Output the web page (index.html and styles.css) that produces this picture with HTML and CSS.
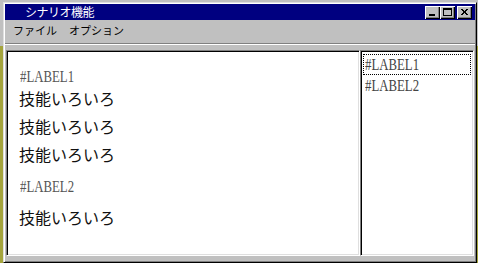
FILE: index.html
```html
<!DOCTYPE html>
<html lang="ja">
<head>
<meta charset="utf-8">
<title>シナリオ機能</title>
<link rel="stylesheet" href="styles.css">
</head>
<body>
<div class="window">
  <div class="titlebar">
    <span class="title">シナリオ機能</span>
    <div class="tbuttons">
      <span class="tbtn"><svg width="15" height="13" viewBox="0 0 15 13"><rect x="4" y="8" width="6" height="2" fill="#000"/></svg></span>
      <span class="tbtn"><svg width="15" height="13" viewBox="0 0 15 13"><rect x="3.5" y="2.5" width="8" height="7" fill="none" stroke="#000"/><rect x="3" y="2" width="9" height="2" fill="#000"/></svg></span>
      <span class="tbtn gap"><svg width="15" height="13" viewBox="0 0 15 13"><path d="M4 3 L10 9 M5 3 L11 9 M10 3 L4 9 M11 3 L5 9" stroke="#000" stroke-width="1" shape-rendering="crispEdges"/></svg></span>
    </div>
  </div>
  <div class="menubar">
    <span class="menuitem">ファイル</span>
    <span class="menuitem">オプション</span>
  </div>
  <div class="separator"></div>
  <div class="panes">
    <div class="pane main">
      <div class="label"><span class="narrow">#LABEL1</span></div>
      <div class="skill">技能いろいろ</div>
      <div class="skill">技能いろいろ</div>
      <div class="skill">技能いろいろ</div>
      <div class="label second"><span class="narrow">#LABEL2</span></div>
      <div class="skill">技能いろいろ</div>
    </div>
    <div class="pane list">
      <div class="item focused"><span class="narrow">#LABEL1</span></div>
      <div class="item"><span class="narrow">#LABEL2</span></div>
    </div>
  </div>
</div>
</body>
</html>
```
FILE: styles.css
```css
html, body {
  margin: 0;
  padding: 0;
}
body {
  width: 478px;
  height: 263px;
  overflow: hidden;
  background: linear-gradient(to bottom, #c0c0c0 46px, #a4a43c 46px);
}
.window {
  box-sizing: border-box;
  margin: 2px 0 0 3px;
  width: 474px;
  height: 261px;
  background: #c0c0c0;
  border: 1px solid;
  border-color: #dfdfdf #000 #000 #dfdfdf;
  box-shadow: inset 1px 1px #fff, inset -1px -1px #808080;
  padding: 1px 1px 5px 1px;
  display: flex;
  flex-direction: column;
}
.titlebar {
  height: 16px;
  background: #000080;
  display: flex;
  align-items: center;
  justify-content: space-between;
  padding: 0 3px 0 20px;
}
.title {
  color: #fff;
  font-family: "Noto Sans CJK JP", sans-serif;
  font-size: 12px;
  line-height: 16px;
  letter-spacing: -0.5px;
}
.tbuttons {
  display: flex;
  align-self: flex-end;
  margin-bottom: 1px;
}
.tbtn {
  box-sizing: border-box;
  width: 15px;
  height: 13px;
  background: #c0c0c0;
  box-shadow: inset 1px 1px #fff, inset -1px -1px #000, inset -2px -2px #808080;
  display: block;
}
.tbtn svg { display: block; }
.tbtn.gap { margin-left: 2px; }
.menubar {
  height: 20px;
  display: flex;
  align-items: center;
  padding-left: 2px;
}
.menuitem {
  font-family: "Noto Sans CJK JP", sans-serif;
  font-size: 11px;
  line-height: 20px;
  padding: 0 6px;
  color: #000;
}
.separator {
  margin-top: 3px;
  height: 1px;
  background: #808080;
  border-bottom: 1px solid #fff;
}
.panes {
  margin: 5px 1px 0 1px;
  height: 206px;
  display: flex;
}
.pane {
  box-sizing: border-box;
  background: #fff;
  border: 1px solid;
  border-color: #808080 #fff #fff #808080;
  box-shadow: inset 1px 1px #000, inset -1px -1px #dfdfdf;
  height: 206px;
}
.main {
  width: 354px;
  padding: 19px 0 0 12px;
}
.list {
  width: 114px;
  padding: 3px 2px 0 2px;
}
.narrow {
  display: inline-block;
  transform: scaleX(0.8);
  transform-origin: left center;
  white-space: nowrap;
}
.label {
  font-family: "Liberation Serif", serif;
  font-size: 16px;
  line-height: 14px;
  color: #555;
  padding-left: 1px;
}
.label.second {
  margin: 12px 0 9px;
}
.skill {
  font-family: "Noto Sans CJK JP", sans-serif;
  font-size: 16px;
  line-height: 28px;
  color: #111;
}
.item {
  box-sizing: border-box;
  font-family: "Liberation Serif", serif;
  font-size: 16px;
  line-height: 19px;
  height: 21px;
  color: #444;
  padding-left: 1px;
  border: 1px solid transparent;
}
.item.focused {
  border: 1px dotted #000;
}
```
